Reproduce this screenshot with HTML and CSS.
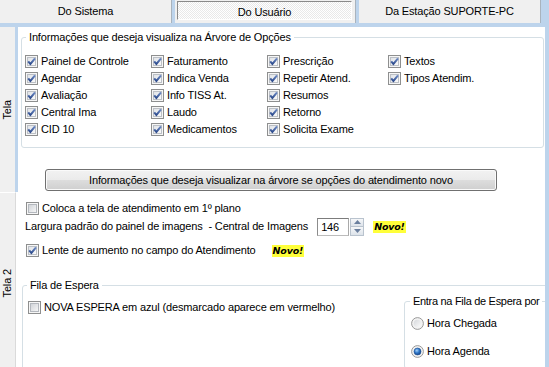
FILE: index.html
```html
<!DOCTYPE html>
<html lang="pt-BR">
<head>
<meta charset="utf-8">
<title>Opções</title>
<link rel="stylesheet" href="styles.css">
</head>
<body>
<svg class="sprite" aria-hidden="true">
  <defs>
    <linearGradient id="g-box" x1="0" y1="0" x2="1" y2="1">
      <stop offset="0" stop-color="#cfd2d7"/>
      <stop offset="1" stop-color="#f8f8f8"/>
    </linearGradient>
    <linearGradient id="g-box-on" x1="0" y1="0" x2="1" y2="1">
      <stop offset="0" stop-color="#dfe2e6"/>
      <stop offset="1" stop-color="#fbfbfb"/>
    </linearGradient>
    <linearGradient id="g-check" x1="0" y1="0" x2="0" y2="1">
      <stop offset="0" stop-color="#6f8cc6"/>
      <stop offset="1" stop-color="#2d4b8c"/>
    </linearGradient>
    <linearGradient id="g-rfill" x1="0" y1="0" x2="1" y2="1">
      <stop offset="0" stop-color="#d6d8dc"/>
      <stop offset="1" stop-color="#fbfbfb"/>
    </linearGradient>
    <radialGradient id="g-dot" cx="0.4" cy="0.35" r="0.7">
      <stop offset="0" stop-color="#a6d3fa"/>
      <stop offset="0.5" stop-color="#2f77c8"/>
      <stop offset="1" stop-color="#123f82"/>
    </radialGradient>
    <symbol id="cb" viewBox="0 0 13 13">
      <rect x="0.5" y="0.5" width="12" height="12" fill="#f6f6f6" stroke="#8e8f8f"/>
      <rect x="2.5" y="2.5" width="8" height="8" fill="url(#g-box)" stroke="#b4b8be"/>
    </symbol>
    <symbol id="cb-on" viewBox="0 0 13 13">
      <rect x="0.5" y="0.5" width="12" height="12" fill="#f6f6f6" stroke="#8e8f8f"/>
      <rect x="2.5" y="2.5" width="8" height="8" fill="url(#g-box-on)" stroke="#bcc0c6"/>
      <path d="M3.2 6.3 5.4 9 10 3.4" fill="none" stroke="url(#g-check)" stroke-width="2"/>
    </symbol>
    <symbol id="rb" viewBox="0 0 13 13">
      <circle cx="6.5" cy="6.5" r="5.9" fill="#f2f2f2" stroke="#8e8f8f" stroke-width="0.9"/>
      <circle cx="6.5" cy="6.5" r="3.8" fill="url(#g-rfill)"/>
    </symbol>
    <symbol id="rb-on" viewBox="0 0 13 13">
      <circle cx="6.5" cy="6.5" r="5.9" fill="#f2f2f2" stroke="#8e8f8f" stroke-width="0.9"/>
      <circle cx="6.5" cy="6.5" r="3.5" fill="url(#g-dot)" stroke="#1a4c8e" stroke-width="0.6"/>
    </symbol>
  </defs>
</svg>

<div class="window">
  <div class="tabbar">
    <div class="tab tab-1"><span class="tab-btn">Do Sistema</span></div>
    <div class="tab tab-2"><span class="tab-btn pressed">Do Usuário</span></div>
    <div class="tab tab-3"><span class="tab-btn">Da Estação SUPORTE-PC</span></div>
  </div>

  <div class="body">
    <div class="pages">
      <section class="page page-1">
        <div class="side side-active"><span class="side-label">Tela</span></div>
        <div class="page-content content-1">
          <fieldset class="group group-tree">
            <legend>Informações que deseja visualiza na Árvore de Opções</legend>
            <div class="check-grid">
              <label class="check"><svg class="box"><use href="#cb-on"/></svg>Painel de Controle</label>
              <label class="check"><svg class="box"><use href="#cb-on"/></svg>Agendar</label>
              <label class="check"><svg class="box"><use href="#cb-on"/></svg>Avaliação</label>
              <label class="check"><svg class="box"><use href="#cb-on"/></svg>Central Ima</label>
              <label class="check"><svg class="box"><use href="#cb-on"/></svg>CID 10</label>
              <label class="check"><svg class="box"><use href="#cb-on"/></svg>Faturamento</label>
              <label class="check"><svg class="box"><use href="#cb-on"/></svg>Indica Venda</label>
              <label class="check"><svg class="box"><use href="#cb-on"/></svg>Info TISS At.</label>
              <label class="check"><svg class="box"><use href="#cb-on"/></svg>Laudo</label>
              <label class="check"><svg class="box"><use href="#cb-on"/></svg>Medicamentos</label>
              <label class="check"><svg class="box"><use href="#cb-on"/></svg>Prescrição</label>
              <label class="check"><svg class="box"><use href="#cb-on"/></svg>Repetir Atend.</label>
              <label class="check"><svg class="box"><use href="#cb-on"/></svg>Resumos</label>
              <label class="check"><svg class="box"><use href="#cb-on"/></svg>Retorno</label>
              <label class="check"><svg class="box"><use href="#cb-on"/></svg>Solicita Exame</label>
              <label class="check"><svg class="box"><use href="#cb-on"/></svg>Textos</label>
              <label class="check"><svg class="box"><use href="#cb-on"/></svg>Tipos Atendim.</label>
            </div>
          </fieldset>
          <button class="btn" type="button">Informações que deseja visualizar na árvore se opções do atendimento novo</button>
        </div>
      </section>

      <section class="page page-2">
        <div class="side side-2"><span class="side-label">Tela 2</span></div>
        <div class="page-content content-2">
          <label class="check row-coloca"><svg class="box"><use href="#cb"/></svg>Coloca a tela de atendimento em 1º plano</label>

          <div class="row-largura">
            <span class="largura-text">Largura padrão do painel de imagens  - Central de Imagens</span>
            <div class="spin">
              <span class="spin-input">146</span>
              <span class="spin-btns">
                <span class="spin-btn"><svg width="7" height="4" viewBox="0 0 7 4"><path d="M0 4 3.5 0 7 4Z" fill="#6a7f9e"/></svg></span>
                <span class="spin-btn"><svg width="7" height="4" viewBox="0 0 7 4"><path d="M0 0 3.5 4 7 0Z" fill="#6a7f9e"/></svg></span>
              </span>
            </div>
            <span class="novo novo-1">Novo!</span>
          </div>

          <div class="row-lente">
            <label class="check"><svg class="box"><use href="#cb-on"/></svg>Lente de aumento no campo do Atendimento</label>
            <span class="novo novo-2">Novo!</span>
          </div>

          <fieldset class="group group-fila">
            <legend>Fila de Espera</legend>
            <div class="fila-body">
              <div class="fila-left">
                <label class="check"><svg class="box"><use href="#cb"/></svg>NOVA ESPERA em azul (desmarcado aparece em vermelho)</label>
              </div>
              <fieldset class="group group-entra">
                <legend>Entra na Fila de Espera por</legend>
                <div class="radios">
                  <label class="check"><svg class="box"><use href="#rb"/></svg>Hora Chegada</label>
                  <label class="check"><svg class="box"><use href="#rb-on"/></svg>Hora Agenda</label>
                </div>
              </fieldset>
            </div>
          </fieldset>
        </div>
      </section>
    </div>
    <div class="edge"></div>
  </div>
</div>
</body>
</html>
```

FILE: styles.css
```css
* { box-sizing: border-box; }

html, body {
  margin: 0;
  padding: 0;
}

body {
  width: 549px;
  height: 367px;
  overflow: hidden;
  background: #ffffff;
  font-family: "Liberation Sans", Arial, sans-serif;
  font-size: 11px;
  line-height: 13px;
  letter-spacing: -0.15px;
  color: #000000;
}

.sprite {
  display: block;
  width: 0;
  height: 0;
  overflow: hidden;
}

.window {
  width: 549px;
  height: 367px;
  display: flex;
  flex-direction: column;
  overflow: hidden;
}

/* ---------- top tab bar ---------- */
.tabbar {
  flex: none;
  display: flex;
  height: 27px;
  padding-bottom: 4px;
  background: #bdd4ec;
}

.tab {
  height: 23px;
  display: flex;
  background: #f0f0f0;
  border-right: 1px solid #a9b3bd;
}

.tab-1 { width: 172px; }
.tab-2 { width: 181px; margin-left: 3px; padding: 1px 3px 3px 2px; }
.tab-3 { width: 182px; margin-left: 3px; }

.tab-btn {
  flex: 1;
  display: flex;
  align-items: center;
  justify-content: center;
}

.pressed {
  border: 1px solid;
  border-color: #8a8a8a #ffffff #ffffff #8a8a8a;
  background: repeating-conic-gradient(#ffffff 0 25%, #e9e9e9 0 50%) 0 0 / 2px 2px;
  padding-top: 3px;
}

/* ---------- body ---------- */
.body {
  flex: 1;
  display: flex;
  min-height: 0;
}

.pages {
  flex: 1;
  display: flex;
  flex-direction: column;
  overflow: hidden;
  background: #ffffff;
}

.edge {
  width: 4px;
  flex: none;
  background: #bdd4ec;
}

.page {
  display: flex;
  flex: none;
}

.page-1 { height: 165px; }
.page-2 { height: 182px; }

.side {
  flex: none;
  display: flex;
  align-items: center;
  justify-content: center;
  background: #f0f0f0;
}

.side-active {
  width: 18px;
  border-right: 3px solid #bdd4ec;
}

.side-2 {
  width: 16px;
  border-right: 1px solid #dadada;
  border-top: 1px solid #ffffff;
}

.side-label {
  writing-mode: vertical-rl;
  transform: rotate(180deg);
  white-space: nowrap;
}

.page-content {
  flex: 1;
  min-width: 0;
  display: flex;
  flex-direction: column;
  align-items: flex-start;
  overflow: hidden;
}

.content-1 { padding-left: 3px; }

/* ---------- group boxes ---------- */
.group {
  margin: 0;
  padding: 0;
  border: 1px solid #d5dfe5;
  border-radius: 3px;
  min-width: 0;
}

.group > legend {
  margin-left: 4px;
  padding: 0 3px;
  line-height: 13px;
}

.group-tree {
  width: 523px;
  margin-top: 4px;
}

.check-grid {
  display: grid;
  grid-template-columns: 126px 116px 121px 120px;
  grid-template-rows: repeat(5, 17px);
  grid-auto-flow: column;
  padding: 9px 0 9px 3px;
}

.check {
  display: flex;
  align-items: center;
  gap: 3px;
  white-space: nowrap;
  height: 17px;
}

.box {
  width: 13px;
  height: 13px;
  flex: none;
}

.btn {
  margin: 21px 0 0 24px;
  width: 452px;
  height: 22px;
  padding: 0;
  border: 1px solid #707070;
  border-radius: 3px;
  background: linear-gradient(#f2f2f2 0%, #ebebeb 48%, #dddddd 52%, #cfcfcf 100%);
  box-shadow: inset 0 0 0 1px #fafafa;
  font-family: "Liberation Sans", Arial, sans-serif;
  font-size: 11px;
  letter-spacing: -0.15px;
  color: #000000;
}

/* ---------- page 2 ---------- */
.row-coloca {
  margin: 8px 0 0 10px;
}

.row-largura {
  display: flex;
  align-items: center;
  height: 19px;
  margin-left: 9px;
}

.largura-text {
  white-space: pre;
}

.spin {
  display: flex;
  margin-left: 9px;
  height: 18px;
}

.spin-input {
  width: 32px;
  height: 18px;
  border: 1px solid;
  border-color: #7c7c7c #a9a9a9 #bcbcbc #8c8c8c;
  background: #ffffff;
  padding: 1px 0 0 3px;
  line-height: 14px;
}

.spin-btns {
  display: flex;
  flex-direction: column;
  width: 14px;
  margin-left: 1px;
}

.spin-btn {
  flex: 1;
  display: flex;
  align-items: center;
  justify-content: center;
  border: 1px solid #b9c3ce;
  background: linear-gradient(#f6f7f9, #dde3ea);
}

.spin-btn + .spin-btn { border-top: none; }

.novo {
  display: inline-block;
  height: 12px;
  padding: 0 1px;
  background: #ffff3a;
  font-family: "DejaVu Sans", sans-serif;
  font-weight: bold;
  font-style: italic;
  font-size: 9.5px;
  line-height: 12px;
  letter-spacing: -0.2px;
}

.novo-1 { margin-left: 9px; }

.row-lente {
  display: flex;
  align-items: center;
  margin: 6px 0 0 10px;
}

.novo-2 { margin-left: 16px; }

.group-fila {
  width: 560px;
  margin: 20px 0 0 6px;
}

.fila-body {
  display: flex;
  align-items: flex-start;
}

.fila-left {
  width: 381px;
  padding: 7px 0 0 5px;
  flex: none;
}

.group-entra {
  width: 160px;
  flex: none;
  margin-top: 3px;
}

.group-entra > legend {
  margin-left: 5px;
  letter-spacing: -0.3px;
}

.radios {
  display: flex;
  flex-direction: column;
  gap: 11px;
  padding: 7px 0 8px 6px;
}
```
